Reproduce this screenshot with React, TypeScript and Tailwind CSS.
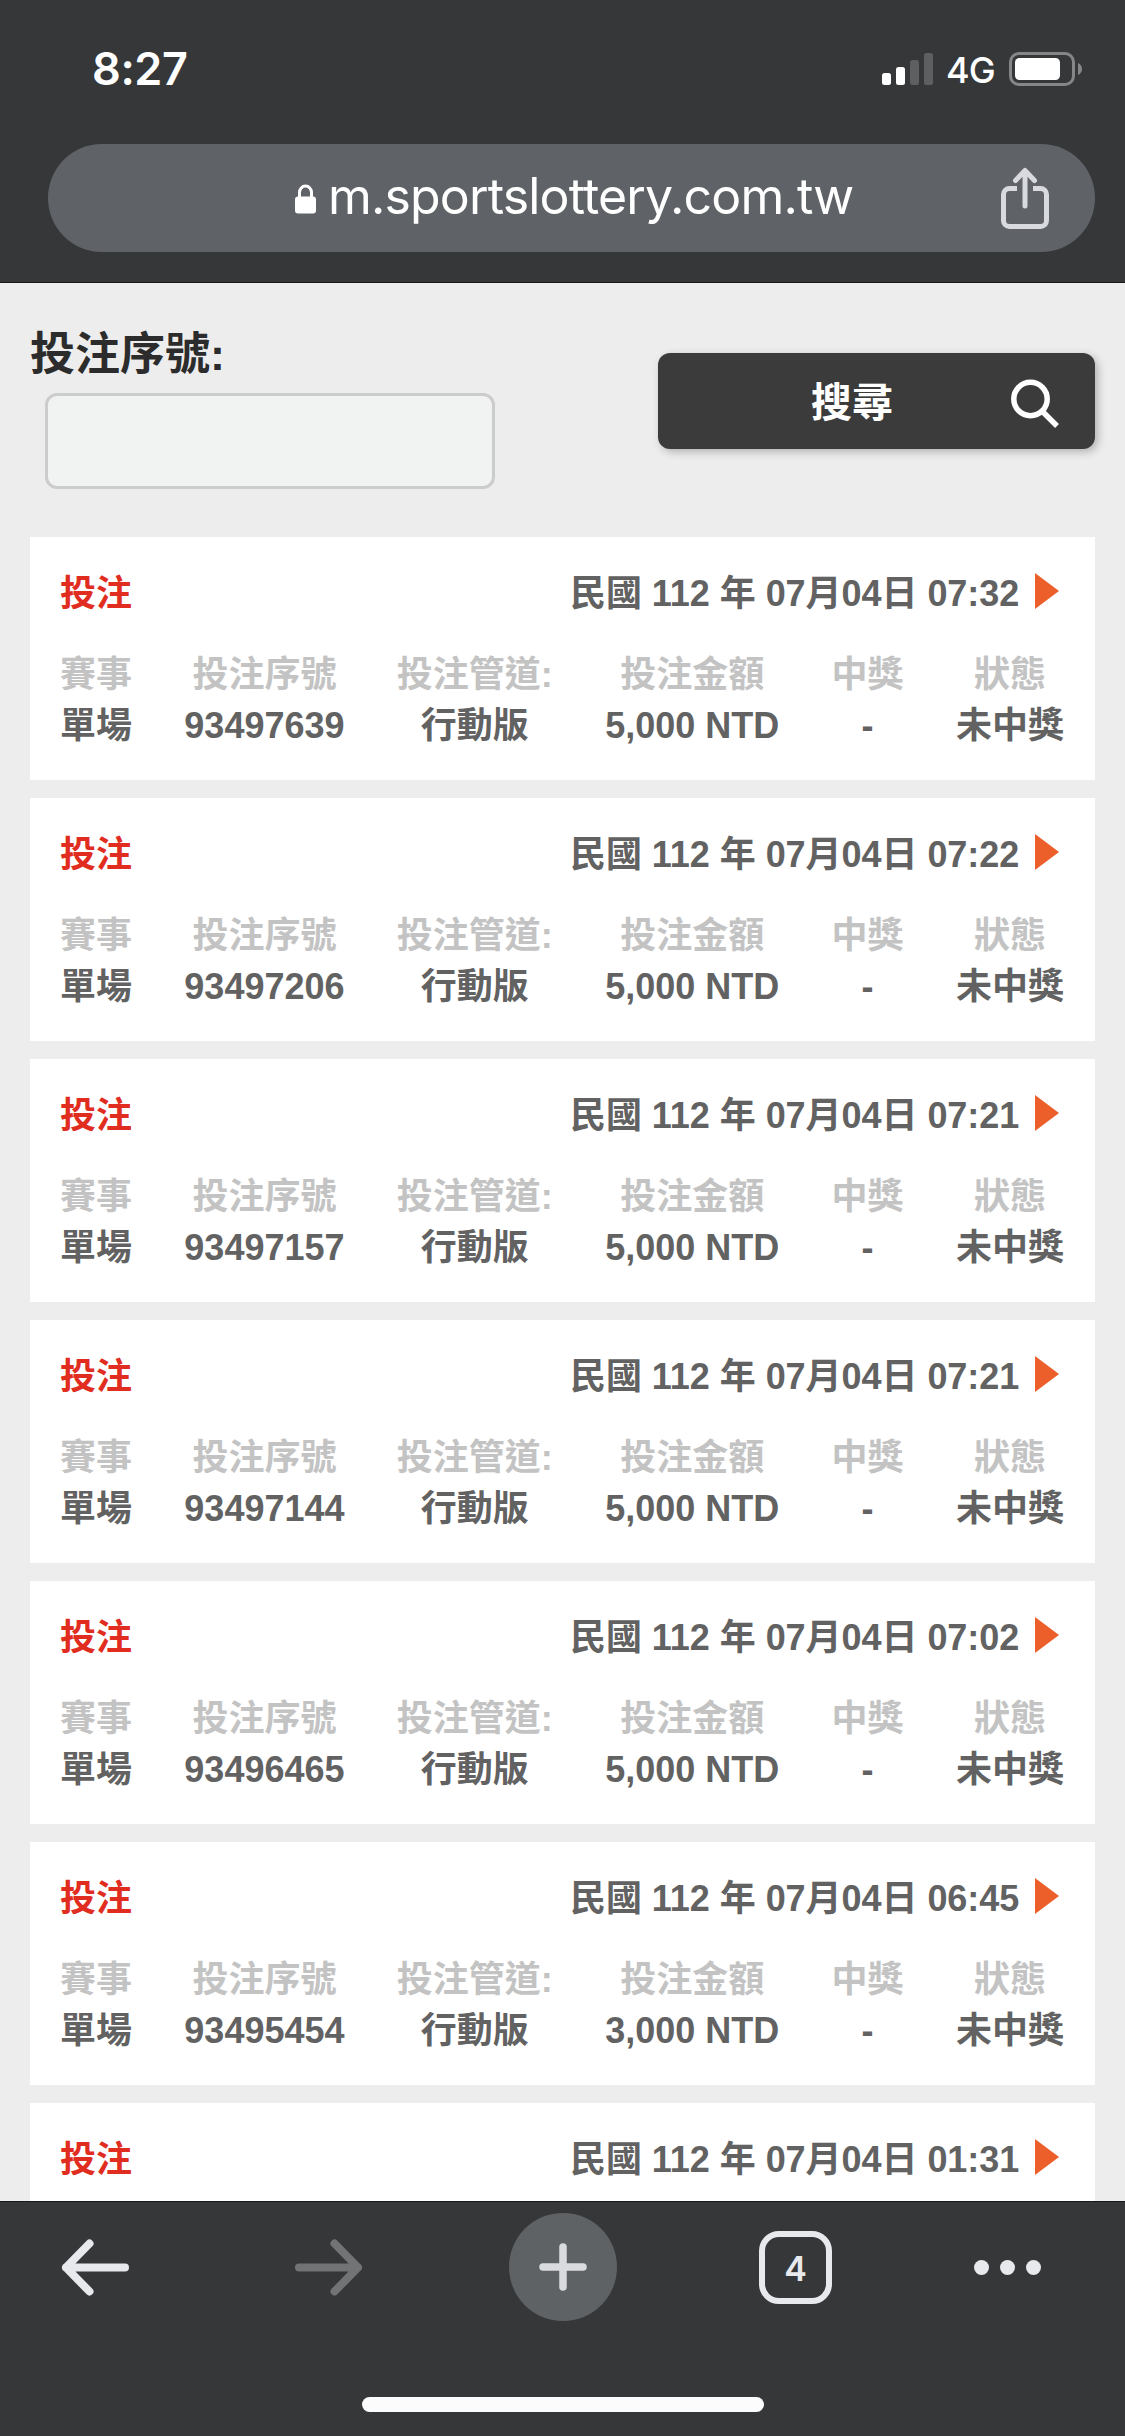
import React, { useState } from 'react';

type Bet = {
  time: string;
  serial?: string;
  amount?: string;
};

const bets: Bet[] = [
  { time: '07:32', serial: '93497639', amount: '5,000 NTD' },
  { time: '07:22', serial: '93497206', amount: '5,000 NTD' },
  { time: '07:21', serial: '93497157', amount: '5,000 NTD' },
  { time: '07:21', serial: '93497144', amount: '5,000 NTD' },
  { time: '07:02', serial: '93496465', amount: '5,000 NTD' },
  { time: '06:45', serial: '93495454', amount: '3,000 NTD' },
  { time: '01:31' },
];

function StatusBar() {
  return (
    <div className="flex h-36 items-start justify-between pl-[92px] pr-[43px] pt-[41px]">
      <span className="text-[45px] font-semibold leading-14 tracking-[-0.4px] text-white">8:27</span>
      <div className="flex pt-[11px]">
        <svg width="51" height="34" viewBox="0 0 51 34">
          <rect x="0" y="21" width="9" height="12" rx="2.5" fill="#fff" />
          <rect x="14" y="15" width="9" height="18" rx="2.5" fill="#fff" />
          <rect x="28" y="8" width="9" height="25" rx="2.5" fill="#5e5f61" />
          <rect x="42" y="1" width="9" height="32" rx="2.5" fill="#5e5f61" />
        </svg>
        <span className="ml-[13px] w-[63px] whitespace-nowrap text-[36px] font-medium leading-[36px] tracking-[-1px] text-white">4G</span>
        <svg width="73" height="34" viewBox="0 0 73 34">
          <rect x="1.5" y="1.5" width="63" height="31" rx="8.5" fill="none" stroke="#858688" strokeWidth="3" />
          <rect x="6" y="6" width="45" height="22" rx="4.5" fill="#fff" />
          <path d="M69 11v12c2.6-1 4-3.400 4-6s-1.400-5-4-6z" fill="#858688" />
        </svg>
      </div>
    </div>
  );
}

function AddressBar() {
  return (
    <div className="ml-12 mr-[30px] flex h-[108px] items-center rounded-full bg-[#5f6267] pl-[247px] pr-[46px]">
      <svg width="21" height="30" viewBox="0 0 21 30" className="mt-0.5">
        <path d="M4.500 14V8.500a6 6.500 0 0 1 12 0V14" fill="none" stroke="#fff" strokeWidth="3" />
        <rect x="0" y="12.500" width="21" height="17" rx="3" fill="#fff" />
      </svg>
      <span className="mb-1 ml-[12px] flex-1 whitespace-nowrap text-[50px] leading-[60px] tracking-[-0.85px] text-white">
        m.sportslottery.com.tw
      </span>
      <svg width="48" height="62" viewBox="0 0 48 62" fill="none" stroke="#d9dadf" strokeWidth="5">
        <path d="M16 21.500H8.500a6 6 0 0 0-6 6v26a6 6 0 0 0 6 6h31a6 6 0 0 0 6-6v-26a6 6 0 0 0-6-6H32" />
        <path d="M24 39V4M14.500 13.500L24 3.500l9.500 10" strokeLinecap="round" strokeLinejoin="round" />
      </svg>
    </div>
  );
}

function SearchForm() {
  const [serial, setSerial] = useState('');

  return (
    <form className="flex h-[254px] justify-between pr-[30px]" onSubmit={(e) => e.preventDefault()}>
      <div className="pl-[30px] pt-[42px]">
        <label htmlFor="serial" className="block h-[68px] text-[45px] font-bold leading-[60px] text-[#2c2c2c]">
          投注序號:
        </label>
        <input
          id="serial"
          value={serial}
          onChange={(e) => setSerial(e.target.value)}
          className="ml-[15px] block h-24 w-[450px] rounded-xl border-3 border-[#cccccc] bg-[#f0f3f1] px-4 text-4xl outline-none"
        />
      </div>
      <button
        type="submit"
        className="mt-[70px] flex h-24 w-[437px] items-center rounded-xl bg-[#3b3b3b] pl-[153px] shadow-[3px_3px_9px_rgba(0,0,0,0.25)]"
      >
        <span className="mt-[3px] w-[200px] text-left text-[41px] font-bold leading-[60px] text-white">搜尋</span>
        <svg width="49" height="53" viewBox="0 0 49 53" fill="none" stroke="#fff" className="mt-2">
          <circle cx="19.500" cy="20" r="16.700" strokeWidth="5.500" />
          <path d="M31.500 32.500L46 47" strokeWidth="5.500" />
        </svg>
      </button>
    </form>
  );
}

function Column({ title, value }: { title: string; value: string }) {
  return (
    <div className="flex flex-col items-center whitespace-nowrap">
      <span className="text-[#c3c3c3]">{title}</span>
      <span>{value}</span>
    </div>
  );
}

function BetCard({ bet }: { bet: Bet }) {
  return (
    <div className="h-[243px] shrink-0 bg-white px-[30px] pt-[31px] text-[36px] font-bold leading-[51px] text-[#626262]">
      <div className="flex justify-between">
        <span className="text-[#e02d1f]">投注</span>
        <div className="flex">
          <span className="w-[465px] whitespace-nowrap tracking-[-0.05px]">民國 112 年 07月04日 {bet.time}</span>
          <svg width="30" height="36" viewBox="0 0 30 36" className="mt-[5px]">
            <path d="M0 0l24 18L0 36z" fill="#ec5f2b" />
          </svg>
        </div>
      </div>
      {bet.serial && bet.amount && (
        <div className="mr-px mt-[30px] flex justify-between">
          <Column title="賽事" value="單場" />
          <Column title="投注序號" value={bet.serial} />
          <Column title="投注管道:" value="行動版" />
          <Column title="投注金額" value={bet.amount} />
          <Column title="中獎" value="-" />
          <Column title="狀態" value="未中獎" />
        </div>
      )}
    </div>
  );
}

function Toolbar() {
  return (
    <nav className="h-[235px] shrink-0 border-t border-[#17181a] bg-[#363739]">
      <div className="flex h-[131px] items-center pl-[61px]">
        <svg width="69" height="57" viewBox="0 0 69 57" fill="none" stroke="#e8e9ed" strokeWidth="8" strokeLinecap="round" strokeLinejoin="round">
          <path d="M64 28.500H5M28.500 4.500L5 28.500l23.500 24" />
        </svg>
        <svg width="69" height="57" viewBox="0 0 69 57" fill="none" stroke="#727375" strokeWidth="8" strokeLinecap="round" strokeLinejoin="round" className="ml-[164px]">
          <path d="M5 28.500h59M40.500 4.500L64 28.500l-23.500 24" />
        </svg>
        <div className="mb-0.5 ml-[146px] flex size-[108px] items-center justify-center rounded-full bg-[#5f6265]">
          <svg width="48" height="48" viewBox="0 0 48 48" stroke="#dadbdf" strokeWidth="7.500" strokeLinecap="round">
            <path d="M24 4v40M4 24h40" />
          </svg>
        </div>
        <div className="ml-[142px] flex size-[73px] items-center justify-center rounded-[20px] border-[6.5px] border-[#e8e9ed]">
          <span className="mt-0.5 text-[34px] font-semibold leading-none text-[#e8e9ed]">4</span>
        </div>
        <div className="ml-[142px] flex gap-[11px]">
          <span className="size-[15px] rounded-full bg-[#e8e9ed]" />
          <span className="size-[15px] rounded-full bg-[#e8e9ed]" />
          <span className="size-[15px] rounded-full bg-[#e8e9ed]" />
        </div>
      </div>
      <div className="mx-auto mt-16 h-[15px] w-[402px] rounded-full bg-[#fcfcfc]" />
    </nav>
  );
}

export default function App() {
  return (
    <div className="flex h-[2436px] w-[1125px] flex-col overflow-hidden bg-[#ededed] font-['Inter',sans-serif]">
      <header className="h-[283px] shrink-0 border-b border-[#17181a] bg-[#363739]">
        <StatusBar />
        <AddressBar />
      </header>
      <main className="min-h-0 flex-1 overflow-hidden font-['Liberation_Sans','Noto_Sans_CJK_TC',sans-serif]">
        <SearchForm />
        <div className="flex flex-col gap-[18px] px-[30px]">
          {bets.map((bet, i) => (
            <BetCard key={i} bet={bet} />
          ))}
        </div>
      </main>
      <Toolbar />
    </div>
  );
}
